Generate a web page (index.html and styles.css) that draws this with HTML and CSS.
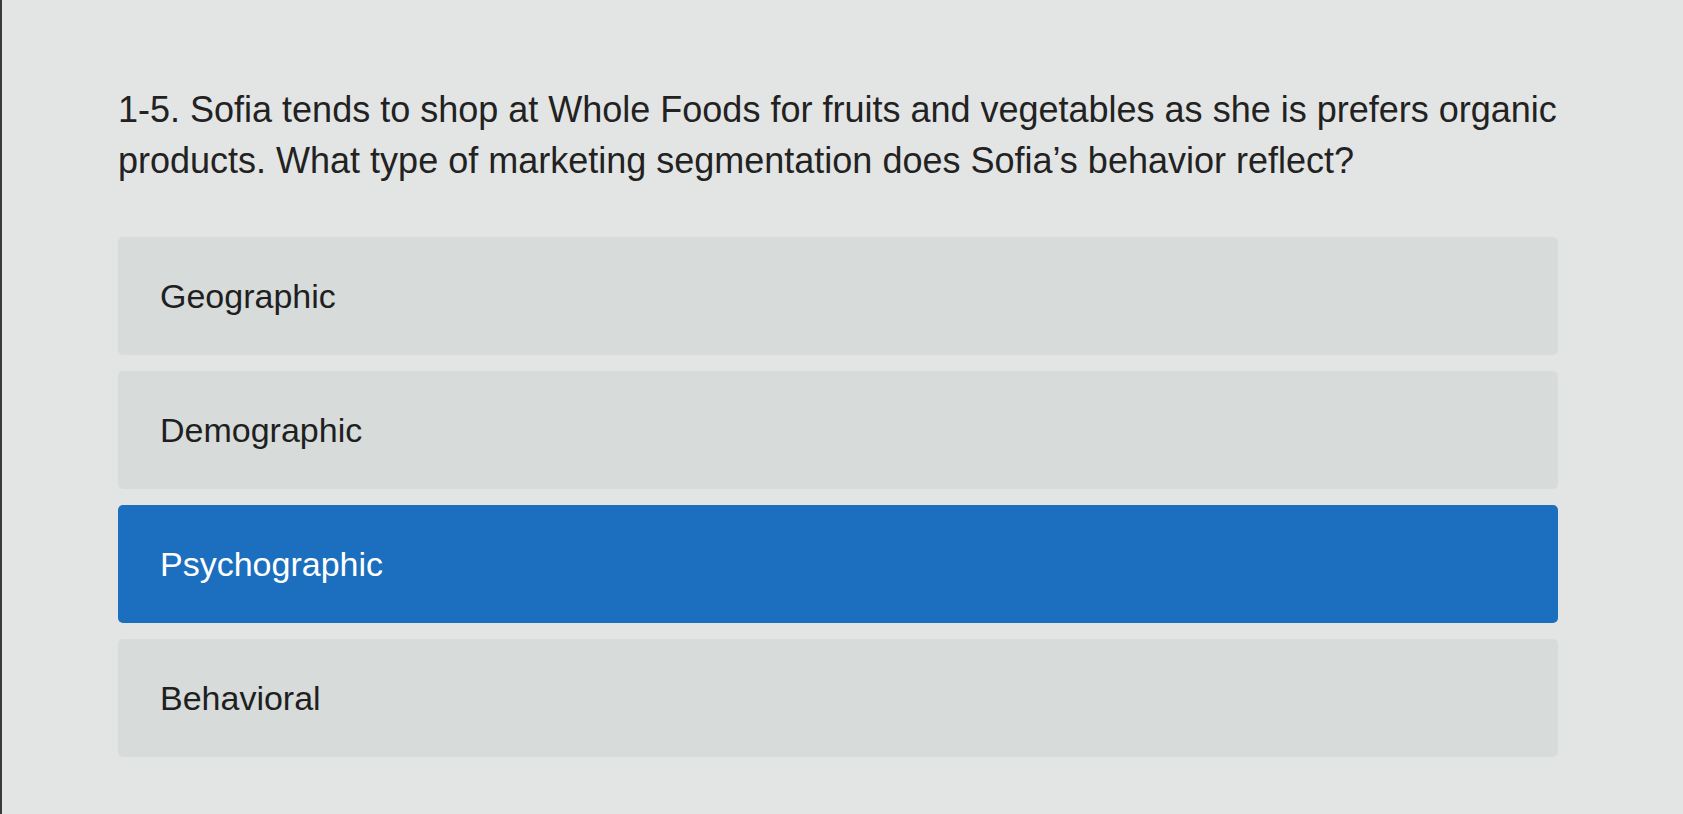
FILE: index.html
```html
<!DOCTYPE html>
<html lang="en">
<head>
    <meta charset="UTF-8">
    <meta name="viewport" content="width=device-width, initial-scale=1.0">
    <title>Question 1-5</title>
    <link rel="stylesheet" href="styles.css">
</head>
<body>
    <div class="quiz">
        <p class="question">1-5. Sofia tends to shop at Whole Foods for fruits and vegetables as she is prefers organic products. What type of marketing segmentation does Sofia’s behavior reflect?</p>

        <div class="choices">
            <div class="choice">Geographic</div>
            <div class="choice">Demographic</div>
            <div class="choice selected">Psychographic</div>
            <div class="choice">Behavioral</div>
        </div>
    </div>
</body>
</html>
```

FILE: styles.css
```css
html, body {
    height: 100%;
}

body {
    margin: 0;
    font-family: 'Liberation Sans', Arial, Helvetica, sans-serif;
    background-color: #e3e5e4;
    color: #222;
    border-left: 2px solid #3a3a3a;
    box-sizing: border-box;
    overflow: hidden;
}

.quiz {
    padding: 84px 0 0 116px;
    width: 1440px;
}

.question {
    margin: 0 0 51px 0;
    font-size: 36px;
    line-height: 51px;
}

.choices {
    display: flex;
    flex-direction: column;
    gap: 16px;
}

.choice {
    height: 118px;
    display: flex;
    align-items: center;
    padding-left: 42px;
    background-color: #d7dbda;
    border-radius: 5px;
    font-size: 34px;
    color: #1f1f1f;
}

.selected {
    background-color: #1b6fbe;
    color: #fff;
}
```
